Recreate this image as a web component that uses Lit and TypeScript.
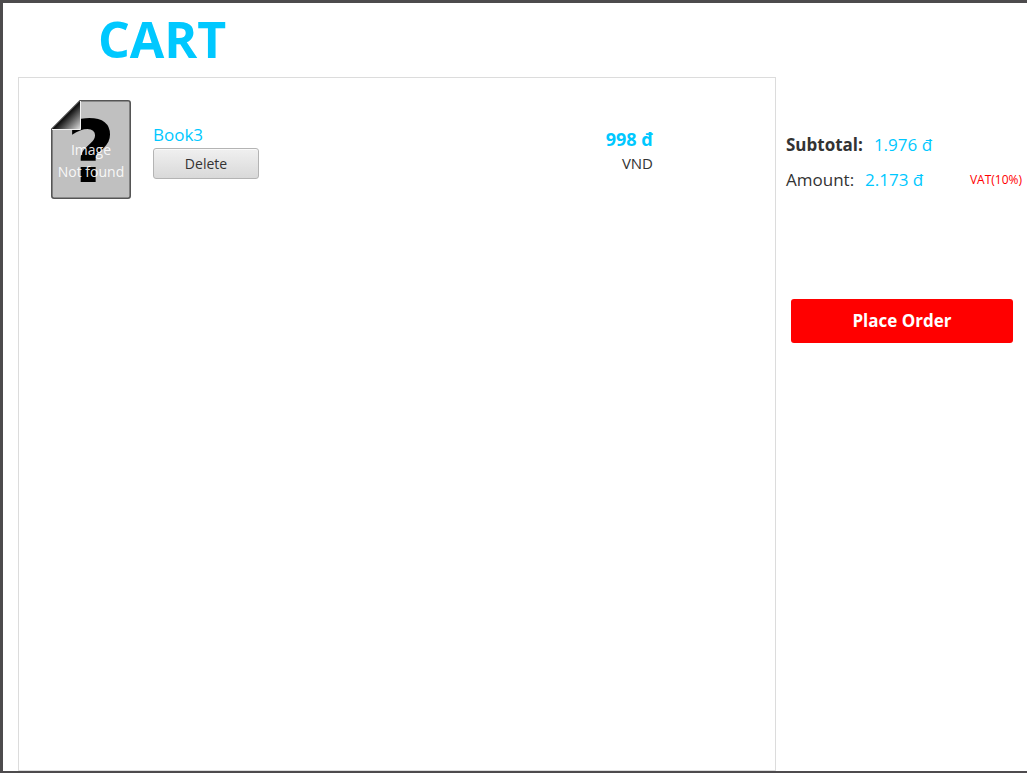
import { LitElement, html, css } from "lit";
import { customElement, property, state } from "lit/decorators.js";

interface CartItem {
  id: number;
  title: string;
  price: number;
}

const formatPrice = (value: number): string =>
  `${String(value).replace(/\B(?=(\d{3})+$)/g, ".")} đ`;

@customElement("missing-cover")
class MissingCover extends LitElement {
  static styles = css`
    :host {
      display: block;
      width: 80px;
      height: 99px;
    }
    .cover {
      display: block;
      width: 100%;
      height: 100%;
      overflow: visible;
    }
    .mark {
      font-family: "DejaVu Sans", sans-serif;
      font-size: 85px;
      font-weight: 700;
      fill: #000;
    }
    .caption {
      font-family: "Open Sans", "Noto Sans", sans-serif;
      font-size: 14px;
      fill: #fff;
      fill-opacity: 0.9;
    }
  `;

  render() {
    return html`
      <svg class="cover" viewBox="0 0 80 99" role="img" aria-label="Image not found">
        <defs>
          <linearGradient id="fold" gradientUnits="userSpaceOnUse" x1="13" y1="13" x2="29" y2="29">
            <stop offset="0" stop-color="#000" />
            <stop offset="0.2" stop-color="#181818" />
            <stop offset="1" stop-color="#ddd" />
          </linearGradient>
        </defs>
        <path
          d="M29 .8H77Q79.2 .8 79.2 3V96Q79.2 98.2 77 98.2H3Q.8 98.2 .8 96V29Z"
          fill="#c0c0c0"
          stroke="#555"
          stroke-width="1.6"
        />
        <text class="mark" x="40" y="82" text-anchor="middle">?</text>
        <path d="M29 1V29H1Z" fill="url(#fold)" />
        <path d="M29.500 1V29.500H1" fill="none" stroke="#f2f2f2" stroke-width="1" />
        <path d="M1 29L29 1" fill="none" stroke="#444" stroke-width="1" />
        <text class="caption" x="40" y="55" text-anchor="middle">Image</text>
        <text class="caption" x="40" y="77" text-anchor="middle">Not found</text>
      </svg>
    `;
  }
}

@customElement("cart-row")
class CartRow extends LitElement {
  @property({ attribute: false }) item!: CartItem;

  static styles = css`
    :host {
      display: grid;
      grid-template-columns: 80px 1fr auto;
      column-gap: 22px;
      padding: 22px 122px 22px 32px;
    }
    .info {
      display: flex;
      flex-direction: column;
      align-items: flex-start;
      padding-top: 23px;
    }
    .title {
      color: #00c8ff;
      font-size: 17px;
      line-height: 24px;
    }
    .delete {
      width: 106px;
      height: 31px;
      margin-top: 1px;
      padding: 0;
      border: 1px solid #b4b4b4;
      border-radius: 3px;
      background: linear-gradient(#f0f0f0, #d9d9d9);
      box-shadow: inset 0 1px #fafafa;
      color: #333;
      font: 14px/20px "Open Sans", "Noto Sans", sans-serif;
    }
    .cost {
      display: flex;
      flex-direction: column;
      align-items: flex-end;
      padding-top: 27px;
      line-height: 24px;
    }
    .price {
      color: #00c8ff;
      font-size: 18px;
      font-weight: 700;
    }
    .currency {
      color: #333;
      font-size: 15px;
    }
  `;

  private remove() {
    this.dispatchEvent(new CustomEvent("remove-item", { detail: this.item.id }));
  }

  render() {
    return html`
      <missing-cover></missing-cover>
      <div class="info">
        <span class="title">${this.item.title}</span>
        <button class="delete" type="button" @click=${this.remove}>Delete</button>
      </div>
      <div class="cost">
        <span class="price">${formatPrice(this.item.price)}</span>
        <span class="currency">VND</span>
      </div>
    `;
  }
}

@customElement("app-root")
class AppRoot extends LitElement {
  @state() private items: CartItem[] = [{ id: 3, title: "Book3", price: 998 }];
  @state() private subtotal = 1976;
  @state() private amount = 2173;

  static styles = css`
    :host {
      display: flex;
      flex-direction: column;
      box-sizing: border-box;
      min-height: 100vh;
      border: solid #4d4b4d;
      border-width: 3px 0 2px 3px;
      background: #fff;
      color: #333;
      font-family: "Open Sans", "Noto Sans", sans-serif;
    }
    .heading {
      margin: 0;
      padding: 2px 95px 4px;
      color: #00c8ff;
      font-size: 50px;
      font-weight: 700;
      line-height: 68px;
    }
    .content {
      flex: 1;
      display: grid;
      grid-template-columns: minmax(0, 1fr) 251px;
      padding-left: 15px;
    }
    .items {
      border: 1px solid #dcdcdc;
    }
    .summary {
      padding: 56px 5px 0 10px;
    }
    .totals {
      display: flex;
      flex-direction: column;
      gap: 11px;
      margin: 0;
      font-size: 17px;
      line-height: 24px;
    }
    .line {
      display: flex;
      align-items: center;
      gap: 11px;
    }
    .label-strong {
      font-weight: 700;
    }
    .value {
      margin: 0;
      color: #00c8ff;
    }
    .vat {
      margin: 0 0 0 auto;
      color: #f00;
      font-size: 12px;
    }
    .order {
      display: block;
      width: 222px;
      height: 44px;
      margin: 107px 0 0 5px;
      padding: 0;
      border: 0;
      border-radius: 3px;
      background: #f00;
      color: #fff;
      font: 700 17px/24px "Open Sans", "Noto Sans", sans-serif;
    }
  `;

  private removeItem(event: CustomEvent<number>) {
    this.items = this.items.filter((item) => item.id !== event.detail);
  }

  render() {
    return html`
      <h1 class="heading">CART</h1>
      <main class="content">
        <section class="items">
          ${this.items.map(
            (item) => html`<cart-row .item=${item} @remove-item=${this.removeItem}></cart-row>`
          )}
        </section>
        <aside class="summary">
          <dl class="totals">
            <div class="line">
              <dt class="label-strong">Subtotal:</dt>
              <dd class="value">${formatPrice(this.subtotal)}</dd>
            </div>
            <div class="line">
              <dt>Amount:</dt>
              <dd class="value">${formatPrice(this.amount)}</dd>
              <dd class="vat">VAT(10%)</dd>
            </div>
          </dl>
          <button class="order" type="button">Place Order</button>
        </aside>
      </main>
    `;
  }
}
